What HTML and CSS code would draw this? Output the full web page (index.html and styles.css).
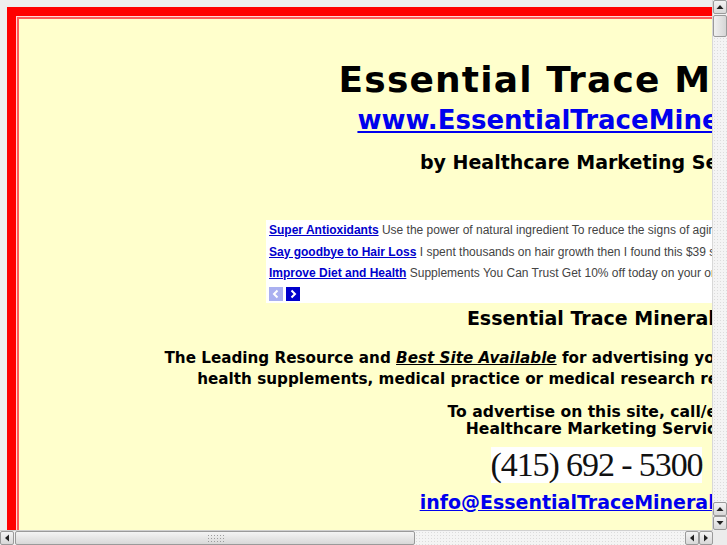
FILE: index.html
```html
<!DOCTYPE html>
<html>
<head>
<meta charset="utf-8">
<title>Essential Trace Minerals</title>
<link rel="stylesheet" href="styles.css">
</head>
<body>
<div class="frame">
  <div class="inner">
    <h1 class="title">Essential Trace Minerals</h1>
    <div class="siteline"><a class="site" href="#">www.EssentialTraceMinerals.com</a></div>
    <p class="by">by Healthcare Marketing Services</p>

    <div class="ads">
      <div class="ad"><a href="#">Super Antioxidants</a> <span>Use the power of natural ingredient To reduce the signs of aging today</span></div>
      <div class="ad"><a href="#">Say goodbye to Hair Loss</a> <span>I spent thousands on hair growth then I found this $39 solution</span></div>
      <div class="ad"><a href="#">Improve Diet and Health</a> <span>Supplements You Can Trust Get 10% off today on your order</span></div>
      <div class="nav">
        <span class="navbtn prev"><svg viewBox="0 0 14 14" width="14" height="14"><path d="M8.5 3.5 L5 7 L8.5 10.5" fill="none" stroke="#fff" stroke-width="2"/></svg></span>
        <span class="navbtn next"><svg viewBox="0 0 14 14" width="14" height="14"><path d="M5.5 3.5 L9 7 L5.5 10.5" fill="none" stroke="#fff" stroke-width="2"/></svg></span>
      </div>
    </div>

    <h2 class="sub">Essential Trace Minerals</h2>
    <p class="lead">The Leading Resource and <em class="best">Best Site Available</em> for advertising your nutritional products, vitamins, and<br>health supplements, medical practice or medical research related web sites and organization.</p>
    <p class="contact">To advertise on this site, call/email<br>Healthcare Marketing Services</p>
    <div class="phone-row"><span class="phone">(415) 692 - 5300</span></div>
    <div class="emailline"><a class="email" href="#">info@EssentialTraceMinerals.com</a></div>
  </div>
</div>

<div class="vscroll">
  <div class="sbtn"><svg viewBox="0 0 14 14" width="14" height="14"><path d="M3.5 9 L7 5 L10.5 9 Z" fill="#222"/></svg></div>
  <div class="vthumb"></div>
  <div class="vtrack"></div>
  <div class="sbtn"><svg viewBox="0 0 14 14" width="14" height="14"><path d="M3.5 9 L7 5 L10.5 9 Z" fill="#222"/></svg></div>
  <div class="sbtn"><svg viewBox="0 0 14 14" width="14" height="14"><path d="M3.5 5 L7 9 L10.5 5 Z" fill="#222"/></svg></div>
</div>
<div class="hscroll">
  <div class="hbtn"><svg viewBox="0 0 14 14" width="14" height="14"><path d="M9 3.5 L5 7 L9 10.5 Z" fill="#222"/></svg></div>
  <div class="hthumb"><span class="grip"></span></div>
  <div class="htrack"></div>
  <div class="hbtn"><svg viewBox="0 0 14 14" width="14" height="14"><path d="M9 3.5 L5 7 L9 10.5 Z" fill="#222"/></svg></div>
  <div class="hbtn"><svg viewBox="0 0 14 14" width="14" height="14"><path d="M5 3.5 L9 7 L5 10.5 Z" fill="#222"/></svg></div>
</div>
<div class="corner"></div>
</body>
</html>
```

FILE: styles.css
```css
html {
  overflow: hidden;
}
body {
  margin: 0;
  background: #eeeeee;
  font-family: "DejaVu Sans", Verdana, sans-serif;
}
.frame {
  margin: 7px;
  width: 1168px;
  border: 9px solid #ff0000;
  padding: 1px;
  background: #ffd6d6;
}
.inner {
  border: 2px solid #ff5a5a;
  background: #ffffcc;
  text-align: center;
  min-height: 1200px;
  padding-top: 39px;
}
.title {
  margin: 0;
  padding-right: 6px;
  font-size: 36px;
  letter-spacing: 1.15px;
  font-weight: bold;
  line-height: 44px;
  color: #000;
}
.siteline {
  margin-top: 3px;
  font-size: 26px;
  line-height: 30px;
  font-weight: bold;
}
.site {
  color: #0000ee;
}
.by {
  margin: 16px 0 0;
  font-size: 19px;
  font-weight: bold;
  line-height: 22px;
}
.ads {
  width: 670px;
  margin: 47px auto 0;
  background: #fff;
  text-align: left;
  padding: 0 3px;
  box-sizing: border-box;
  font-family: "Liberation Sans", Arial, sans-serif;
  font-size: 12px;
  white-space: nowrap;
  overflow: hidden;
}
.ad {
  line-height: 21.5px;
}
.ad a {
  color: #0000cc;
  font-weight: bold;
}
.ad span {
  color: #444;
}
.nav {
  display: flex;
  gap: 3px;
  height: 18px;
  align-items: center;
}
.navbtn {
  display: block;
  width: 14px;
  height: 14px;
}
.navbtn svg {
  display: block;
}
.prev {
  background: #aab0f0;
}
.next {
  background: #0000cc;
}
.sub {
  margin: 4px 0 0;
  padding-right: 9px;
  font-size: 19px;
  font-weight: bold;
  line-height: 22px;
}
.lead {
  margin: 19px 0 0;
  font-size: 15.2px;
  font-weight: bold;
  line-height: 21px;
}
.best {
  text-decoration: underline;
}
.contact {
  margin: 14px 0 0;
  font-size: 15.6px;
  font-weight: bold;
  line-height: 17.5px;
}
.phone-row {
  margin-top: 8px;
  padding-right: 9px;
  display: flex;
  justify-content: center;
}
.phone {
  display: block;
  background: #fff;
  font-family: "Liberation Serif", "Times New Roman", serif;
  font-size: 34px;
  letter-spacing: -1.1px;
  line-height: 36px;
  color: #111;
}
.emailline {
  margin-top: 7px;
  padding-right: 5px;
  font-size: 19px;
  line-height: 24px;
  font-weight: bold;
}
.email {
  color: #0000ee;
}

/* fake browser scrollbars */
.vscroll {
  position: fixed;
  top: 0;
  right: 0;
  width: 14px;
  height: 530px;
  display: flex;
  flex-direction: column;
  background: #f2f2f2;
  border-left: 1px solid #d8d8d8;
}
.sbtn, .hbtn {
  width: 14px;
  height: 14px;
  box-sizing: border-box;
  border: 1px solid #9a9a9a;
  border-radius: 2px;
  background: linear-gradient(#f4f4f4, #d8d8d8);
  flex: none;
}
.sbtn svg, .hbtn svg {
  display: block;
  margin: -1px;
}
.vthumb {
  height: 22px;
  margin-top: 1px;
  box-sizing: border-box;
  border: 1px solid #9a9a9a;
  border-radius: 2px;
  background: linear-gradient(90deg, #f0f0f0, #d6d6d6);
  flex: none;
}
.vtrack {
  flex: 1;
  background-color: #f4f4f4;
  background-image: radial-gradient(#dcdcdc 0.6px, transparent 0.8px);
  background-size: 3px 3px;
}
.hscroll {
  position: fixed;
  left: 0;
  bottom: 0;
  width: 713px;
  height: 15px;
  display: flex;
  background: #f2f2f2;
  border-top: 1px solid #d0d0d0;
  box-sizing: border-box;
}
.hthumb {
  width: 400px;
  margin-left: 1px;
  box-sizing: border-box;
  border: 1px solid #9a9a9a;
  border-radius: 2px;
  background: linear-gradient(#f4f4f4, #d8d8d8);
  display: flex;
  justify-content: center;
  align-items: center;
  flex: none;
}
.grip {
  width: 17px;
  height: 8px;
  background-image: radial-gradient(#9c9c9c 0.7px, transparent 0.9px);
  background-size: 3px 3px;
}
.htrack {
  flex: 1;
  background-color: #f4f4f4;
  background-image: radial-gradient(#dcdcdc 0.6px, transparent 0.8px);
  background-size: 3px 3px;
}
.corner {
  position: fixed;
  right: 0;
  bottom: 0;
  width: 14px;
  height: 15px;
  background: #ececec;
}
```
